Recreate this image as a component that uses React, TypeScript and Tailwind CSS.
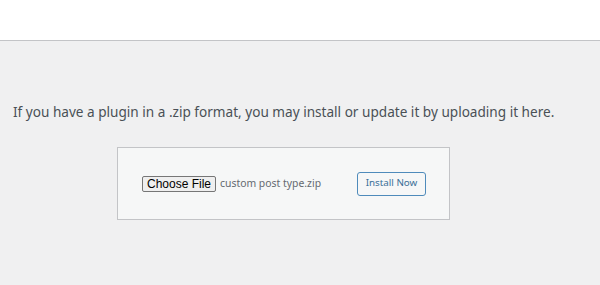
export default function App() {
  return (
    <div className="min-h-[285px] w-[600px] bg-[#f0f0f1] text-[#3c434a] font-['Noto_Sans',sans-serif]">
      <div className="h-[41px] bg-white border-b border-[#c3c4c7]" />
      <p className="pl-[13px] pt-[61px] text-[13.6px] leading-[20px] text-[#4a5056]">
        If you have a plugin in a .zip format, you may install or update it by uploading it here.
      </p>
      <div className="mt-[25px] ml-[117px] w-[333px] h-[73px] bg-[#f6f7f7] border border-[#c3c4c7] flex items-center pl-[24px]">
        <button className="h-[16px] px-[4px] flex items-center bg-[#efefef] border border-[#767676] rounded-[2px] text-[12px] text-black font-['Liberation_Sans',sans-serif]">
          Choose File
        </button>
        <span className="ml-[4px] text-[10.4px] text-[#646970]">custom post type.zip</span>
        <button className="ml-auto mr-[23px] w-[69px] h-[24px] bg-[#f6f7f7] border border-[#4f8bbb] rounded-[3px] text-[9.8px] text-[#3b6f98]">
          Install Now
        </button>
      </div>
    </div>
  );
}
